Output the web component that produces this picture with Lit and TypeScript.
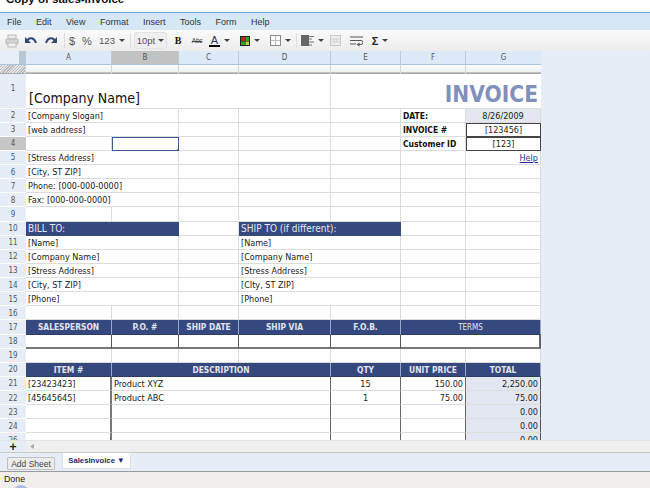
import { LitElement, html, css, svg } from "lit";
import { customElement } from "lit/decorators.js";

type Cell = { t?: string; s?: number; c?: string };

const blank = (c = ""): Cell => ({ c });
const merged = (t: string, c = "", s = 2): Cell => ({ t, s, c });

function buildRows(): Cell[][] {
  const rows: Cell[][] = [];
  rows.push([merged("[Company Name]", "name", 4), merged("INVOICE", "inv", 3)]);
  rows.push([merged("[Company Slogan]"), blank(), blank(), blank(), { t: "DATE:", c: "lab" }, { t: "8/26/2009", c: "mid date" }]);
  rows.push([merged("[web address]"), blank(), blank(), blank(), { t: "INVOICE #", c: "lab" }, { t: "[123456]", c: "mid box" }]);
  rows.push([blank(), blank("sel"), blank(), blank(), blank(), { t: "Customer ID", c: "lab" }, { t: "[123]", c: "mid box" }]);
  rows.push([merged("[Stress Address]"), blank(), blank(), blank(), blank(), { t: "Help", c: "help" }]);
  for (const t of ["[City, ST ZIP]", "Phone: [000-000-0000]", "Fax: [000-000-0000]"])
    rows.push([merged(t), blank(), blank(), blank(), blank(), blank()]);
  rows.push([blank(), blank(), blank(), blank(), blank(), blank(), blank()]);
  rows.push([merged("BILL TO:", "band"), blank(), merged("SHIP TO (if different):", "band"), blank(), blank()]);
  for (const [a, b] of [
    ["[Name]", "[Name]"],
    ["[Company Name]", "[Company Name]"],
    ["[Stress Address]", "[Stress Address]"],
    ["[City, ST ZIP]", "[CIty, ST ZIP]"],
    ["[Phone]", "[Phone]"],
  ])
    rows.push([merged(a), blank(), merged(b), blank(), blank()]);
  rows.push([blank(), blank(), blank(), blank(), blank(), blank(), blank()]);
  rows.push([
    ...["SALESPERSON", "P.O. #", "SHIP DATE", "SHIP VIA", "F.O.B."].map((t) => ({ t, c: "head" })),
    { t: "TERMS", s: 2, c: "head thin" },
  ]);
  rows.push([blank("slot wide"), blank("slot wide"), blank("slot"), blank("slot"), blank("slot"), { s: 2, c: "slot last" }]);
  rows.push([blank(), blank(), blank(), blank(), blank(), blank(), blank()]);
  rows.push([
    { t: "ITEM #", c: "head" },
    { t: "DESCRIPTION", s: 3, c: "head" },
    { t: "QTY", c: "head" },
    { t: "UNIT PRICE", c: "head" },
    { t: "TOTAL", c: "head" },
  ]);
  const item = (a: string, b: string, q: string, p: string, tot: string): Cell[] => [
    { t: a, c: "item" },
    { t: b, s: 3, c: "dk" },
    { t: q, c: "mid dk" },
    { t: p, c: "num dk" },
    { t: tot, c: "num total" },
  ];
  rows.push(item("[23423423]", "Product XYZ", "15", "150.00", "2,250.00"));
  rows.push(item("[45645645]", "Product ABC", "1", "75.00", "75.00"));
  for (let i = 0; i < 3; i++) rows.push(item("", "", "", "", "0.00"));
  return rows;
}

const LABELS = ["1", "2", "3", "4", "5", "6", "7", "8", "9", "10", "11", "12", "13", "14", "15", "16", "17", "18", "19", "20", "21", "22", "23", "24", "26"];
const MENUS = ["File", "Edit", "View", "Format", "Insert", "Tools", "Form", "Help"];
const COLS = ["A", "B", "C", "D", "E", "F", "G"];

const caret = html`<svg class="caret" width="6" height="3" viewBox="0 0 6 3"><path d="M0 0h6L3 3z" fill="#444"/></svg>`;

@customElement("app-root")
export class AppRoot extends LitElement {
  static styles = css`
    :host { display: block; width: 650px; height: 488px; overflow: hidden; background: #fff; font-family: "Liberation Sans", Arial, sans-serif; }
    .page { display: flex; flex-direction: column; height: 488px; }
    .title { height: 12px; flex: none; overflow: hidden; line-height: 0; background: #fff; }
    .title b { display: block; margin: -1px 0 0 6px; font-size: 11.5px; color: #111; white-space: nowrap; }
    .menu { height: 18px; flex: none; box-sizing: border-box; border-top: 1px solid #6fa3d0; background: #d6e7f6; display: flex; gap: 14.5px; padding-left: 7px; align-items: center; font-size: 9px; color: #333; }
    .tools { height: 21px; flex: none; box-sizing: border-box; background: linear-gradient(#fafafa, #ececec); display: grid; align-items: center; justify-items: center; padding-left: 3px;
      grid-template-columns: 18px 20px 19px 8px 8px 22px 28px 8px 33px 22px 16px 29px 32px 28px 4px 28px 18px 24px 24px; font-size: 9.5px; color: #555; }
    .sym { font-size: 11px; }
    .group { display: flex; align-items: center; gap: 4px; }
    .caret { flex: none; }
    .sep { width: 1px; height: 15px; background: #ddd; }
    .size { width: 33px; height: 17px; box-sizing: border-box; border: 1px solid #e2e2e2; background: #efefef; display: flex; align-items: center; justify-content: center; gap: 3px; border-radius: 2px; }
    .bold { font-family: "Liberation Serif", serif; font-weight: 700; font-size: 10px; color: #111; }
    .abc { font-size: 6.5px; color: #444; text-decoration: line-through; letter-spacing: -0.3px; }
    .aa { display: flex; flex-direction: column; align-items: center; line-height: 10px; font-size: 11px; color: #334; width: 11px; }
    .aa i { display: block; width: 11px; height: 2px; background: #000; }
    .sigma { font-weight: 700; font-size: 11px; color: #222; }

    .body { flex: none; height: 389px; overflow: hidden; background: #e6edf7; }
    .sheet { width: 541px; display: grid; grid-template-columns: 26px 86px 67px 60px 92px 70px 65px 75px; grid-template-rows: 14px 9px 34.5px; grid-auto-rows: 14.14px;
      font-family: "DejaVu Sans", Verdana, sans-serif; font-stretch: condensed; font-size: 9px; color: #222; }
    .ch { background: #dce9f6; border-right: 1px solid #b5cbe0; border-bottom: 1px solid #a9c4dc; box-sizing: border-box; display: flex; align-items: center; justify-content: center; font-size: 8px; color: #555; }
    .ch.on { background: #c2c2c2; }
    .ch.corner { background: linear-gradient(90deg, #e6eef8 78%, #b9c6d4 78%); }
    .ch.last { border-right: none; }
    .fz { background: linear-gradient(#fbfbfc, #eef1f4 75%, #a5a5a5 88%, #aaa); border-right: 1px solid #d6d6d6; box-sizing: border-box; }
    .fz.last { border-right: none; }
    .fz.hatch { background: repeating-linear-gradient(135deg, #e8e8e8 0 1px, #b8b8b8 1px 2px); border-bottom: 1px solid #aaa; }
    .rh { background: #e6edf7; border-bottom: 1px solid #fff; box-sizing: border-box; padding-top: 1px; display: flex; align-items: center; justify-content: center; font-size: 8px; color: #555; }
    .rh.on { background: #c6c6c6; }
    .rh.tall { padding: 0 0 4px; }
    .cell { min-width: 0; box-sizing: border-box; background: #fff; border-right: 1px solid #dcdcdc; border-bottom: 1px solid #dcdcdc; padding: 1px 2px 0; display: flex; align-items: center; white-space: nowrap; overflow: hidden; position: relative; }
    .name { font-size: 14px; color: #111; align-items: flex-end; padding: 0 2px 2px 3px; }
    .inv { font-size: 22.5px; font-weight: 700; color: #7f90bb; justify-content: flex-end; align-items: flex-end; padding: 0 3px 0 0; line-height: 28px; border-right: none; }
    .lab { font-weight: 600; font-size: 8.5px; color: #111; }
    .mid { justify-content: center; }
    .date { background: #e4e7f0; }
    .box { border: 1px solid #444; }
    .help { justify-content: flex-end; color: #2b2b9a; text-decoration: underline; padding-right: 2px; }
    .sel { border: 1.5px solid #3b5b97; overflow: visible; }
    .sel::after { content: ""; position: absolute; right: -3px; bottom: -3px; width: 4px; height: 4px; background: #3b5b97; }
    .band { background: #35497f; color: #e4e8f2; font-size: 10px; border-right-color: #35497f; border-bottom-color: #35497f; }
    .head { background: #35497f; color: #e0e5f0; font-weight: 700; font-size: 8.4px; justify-content: center; border-right: 1px solid #9aa8c8; border-bottom: 1px solid #2c3c68; }
    .head.thin { font-weight: 400; font-size: 8px; }
    .slot { border-right: 1px solid #555; border-bottom: 2px solid #777; }
    .slot.wide { border-right-width: 1.5px; }
    .slot.last { border-right: 2px solid #666; }
    .item { border-right: 2px solid #777; }
    .dk { border-right: 1px solid #666; }
    .num { justify-content: flex-end; }
    .total { background: #e2e6f0; border-right: 1px solid #555; }

    .scroll { height: 13px; flex: none; box-sizing: border-box; display: flex; background: #efefef; border-bottom: 1px solid #c8c8c8; border-top: 1px solid #e4e4e4; }
    .plus { width: 26px; background: #e6edf7; display: flex; align-items: center; justify-content: center; font-size: 12px; font-weight: 700; color: #222; }
    .arrow { margin: 3px 0 0 4px; }
    .tabs { height: 19px; flex: none; box-sizing: border-box; background: #e6edf7; border-bottom: 1px solid #9a9a9a; display: flex; align-items: flex-start; padding-left: 7px; gap: 7px; }
    .add { margin-top: 4px; width: 48px; height: 13px; box-sizing: border-box; border: 1px solid #c0c0c0; background: #ececec; display: flex; align-items: center; justify-content: center; font-size: 8.5px; color: #444; border-radius: 1px; }
    .tab { width: 69px; height: 16px; box-sizing: border-box; background: #fff; border: 1px solid #d9dfe8; border-top: none; display: flex; align-items: center; justify-content: center; font-size: 7.7px; font-weight: 700; color: #26266e; }
    .status { flex: 1; background: #f1eeec; position: relative; font-size: 8.8px; color: #222; padding: 2px 0 0 4px; overflow: hidden; }
    .orb { position: absolute; left: 12px; top: 13px; width: 18px; height: 18px; border-radius: 50%; background: #a9bfd6; }
  `;

  private icon(body: unknown, w = 14, h = 14) {
    return html`<svg width=${w} height=${h} viewBox="0 0 ${w} ${h}">${body}</svg>`;
  }

  render() {
    const rows = buildRows();
    return html`<div class="page">
      <div class="title"><b>Copy of sales-invoice</b></div>
      <div class="menu">${MENUS.map((m) => html`<span>${m}</span>`)}</div>
      <div class="tools">
        ${this.icon(svg`<rect x="3" y="1" width="8" height="4" fill="#ececec" stroke="#bbb"/><rect x="1" y="5" width="12" height="5" rx="1" fill="#d4d4d4" stroke="#b4b4b4"/><rect x="3" y="9" width="8" height="4" fill="#f2f2f2" stroke="#bbb"/>`)}
        ${this.icon(svg`<path d="M3 7 C5 3 10 3 12 9" fill="none" stroke="#2f4a70" stroke-width="2"/><path d="M1 3v6h6z" fill="#2f4a70"/>`)}
        ${this.icon(svg`<path d="M11 7 C9 3 4 3 2 9" fill="none" stroke="#2f4a70" stroke-width="2"/><path d="M13 3v6H7z" fill="#2f4a70"/>`)}
        <i class="sep"></i>
        <span class="sym">$</span>
        <span class="sym">%</span>
        <span class="group">123 ${caret}</span>
        <i class="sep"></i>
        <span class="size">10pt ${caret}</span>
        <span class="bold">B</span>
        <span class="abc">Abc</span>
        <span class="group"><span class="aa">A<i></i></span>${caret}</span>
        <span class="group">${this.icon(svg`<rect x="0" y="0" width="10" height="10" fill="#222"/><rect x="1" y="1" width="4" height="4" fill="#c22"/><rect x="5.5" y="1" width="3.5" height="4" fill="#2a2"/><rect x="1" y="5.5" width="4" height="3.5" fill="#2a2"/><rect x="5.5" y="5.5" width="3.5" height="3.5" fill="#cc3"/>`, 10, 10)}${caret}</span>
        <span class="group">${this.icon(svg`<rect x=".5" y=".5" width="10" height="10" fill="#fafafa" stroke="#888"/><path d="M5.5 1v9M1 5.5h9" stroke="#bbb"/>`, 11, 11)}${caret}</span>
        <i class="sep"></i>
        <span class="group">${this.icon(svg`<rect x="0" y="0" width="8" height="11" fill="#666"/><path d="M8 1.5h5M8 4h3M8 7h5M8 10h3" stroke="#777"/>`, 13, 11)}${caret}</span>
        ${this.icon(svg`<rect x=".5" y=".5" width="10" height="10" fill="#eee" stroke="#c8c8c8"/><path d="M1 4h9M1 7h9M4 4v3M7 4v3" stroke="#d0d0d0"/>`, 11, 11)}
        ${this.icon(svg`<path d="M0 2h13M0 5.5h11M0 9h6" stroke="#555" stroke-width="1.1"/><path d="M11 5.5a2 2 0 0 1 0 4H9" fill="none" stroke="#555"/><path d="M9.5 7.5v4L6.5 9.5z" fill="#555"/>`, 13, 12)}
        <span class="group"><span class="sigma">Σ</span>${caret}</span>
      </div>
      <div class="body">
        <div class="sheet">
          <div class="ch corner"></div>
          ${COLS.map((c, i) => html`<div class="ch ${c === "B" ? "on" : ""} ${i === 6 ? "last" : ""}">${c}</div>`)}
          <div class="fz hatch"></div>
          ${COLS.map((_, i) => html`<div class="fz ${i === 6 ? "last" : ""}"></div>`)}
          ${rows.map(
            (row, i) => html`
              <div class="rh ${i === 3 ? "on" : ""} ${i === 0 ? "tall" : ""}">${LABELS[i]}</div>
              ${row.map(
                (cell) => html`<div class="cell ${cell.c ?? ""}" style=${cell.s ? `grid-column: span ${cell.s}` : ""}>${cell.t ?? ""}</div>`
              )}
            `
          )}
        </div>
      </div>
      <div class="scroll">
        <div class="plus">+</div>
        <svg class="arrow" width="4" height="5" viewBox="0 0 4 5"><path d="M4 0v5L0 2.5z" fill="#aaa"/></svg>
      </div>
      <div class="tabs">
        <div class="add">Add Sheet</div>
        <div class="tab">SalesInvoice ▼</div>
      </div>
      <div class="status">Done<div class="orb"></div></div>
    </div>`;
  }
}
